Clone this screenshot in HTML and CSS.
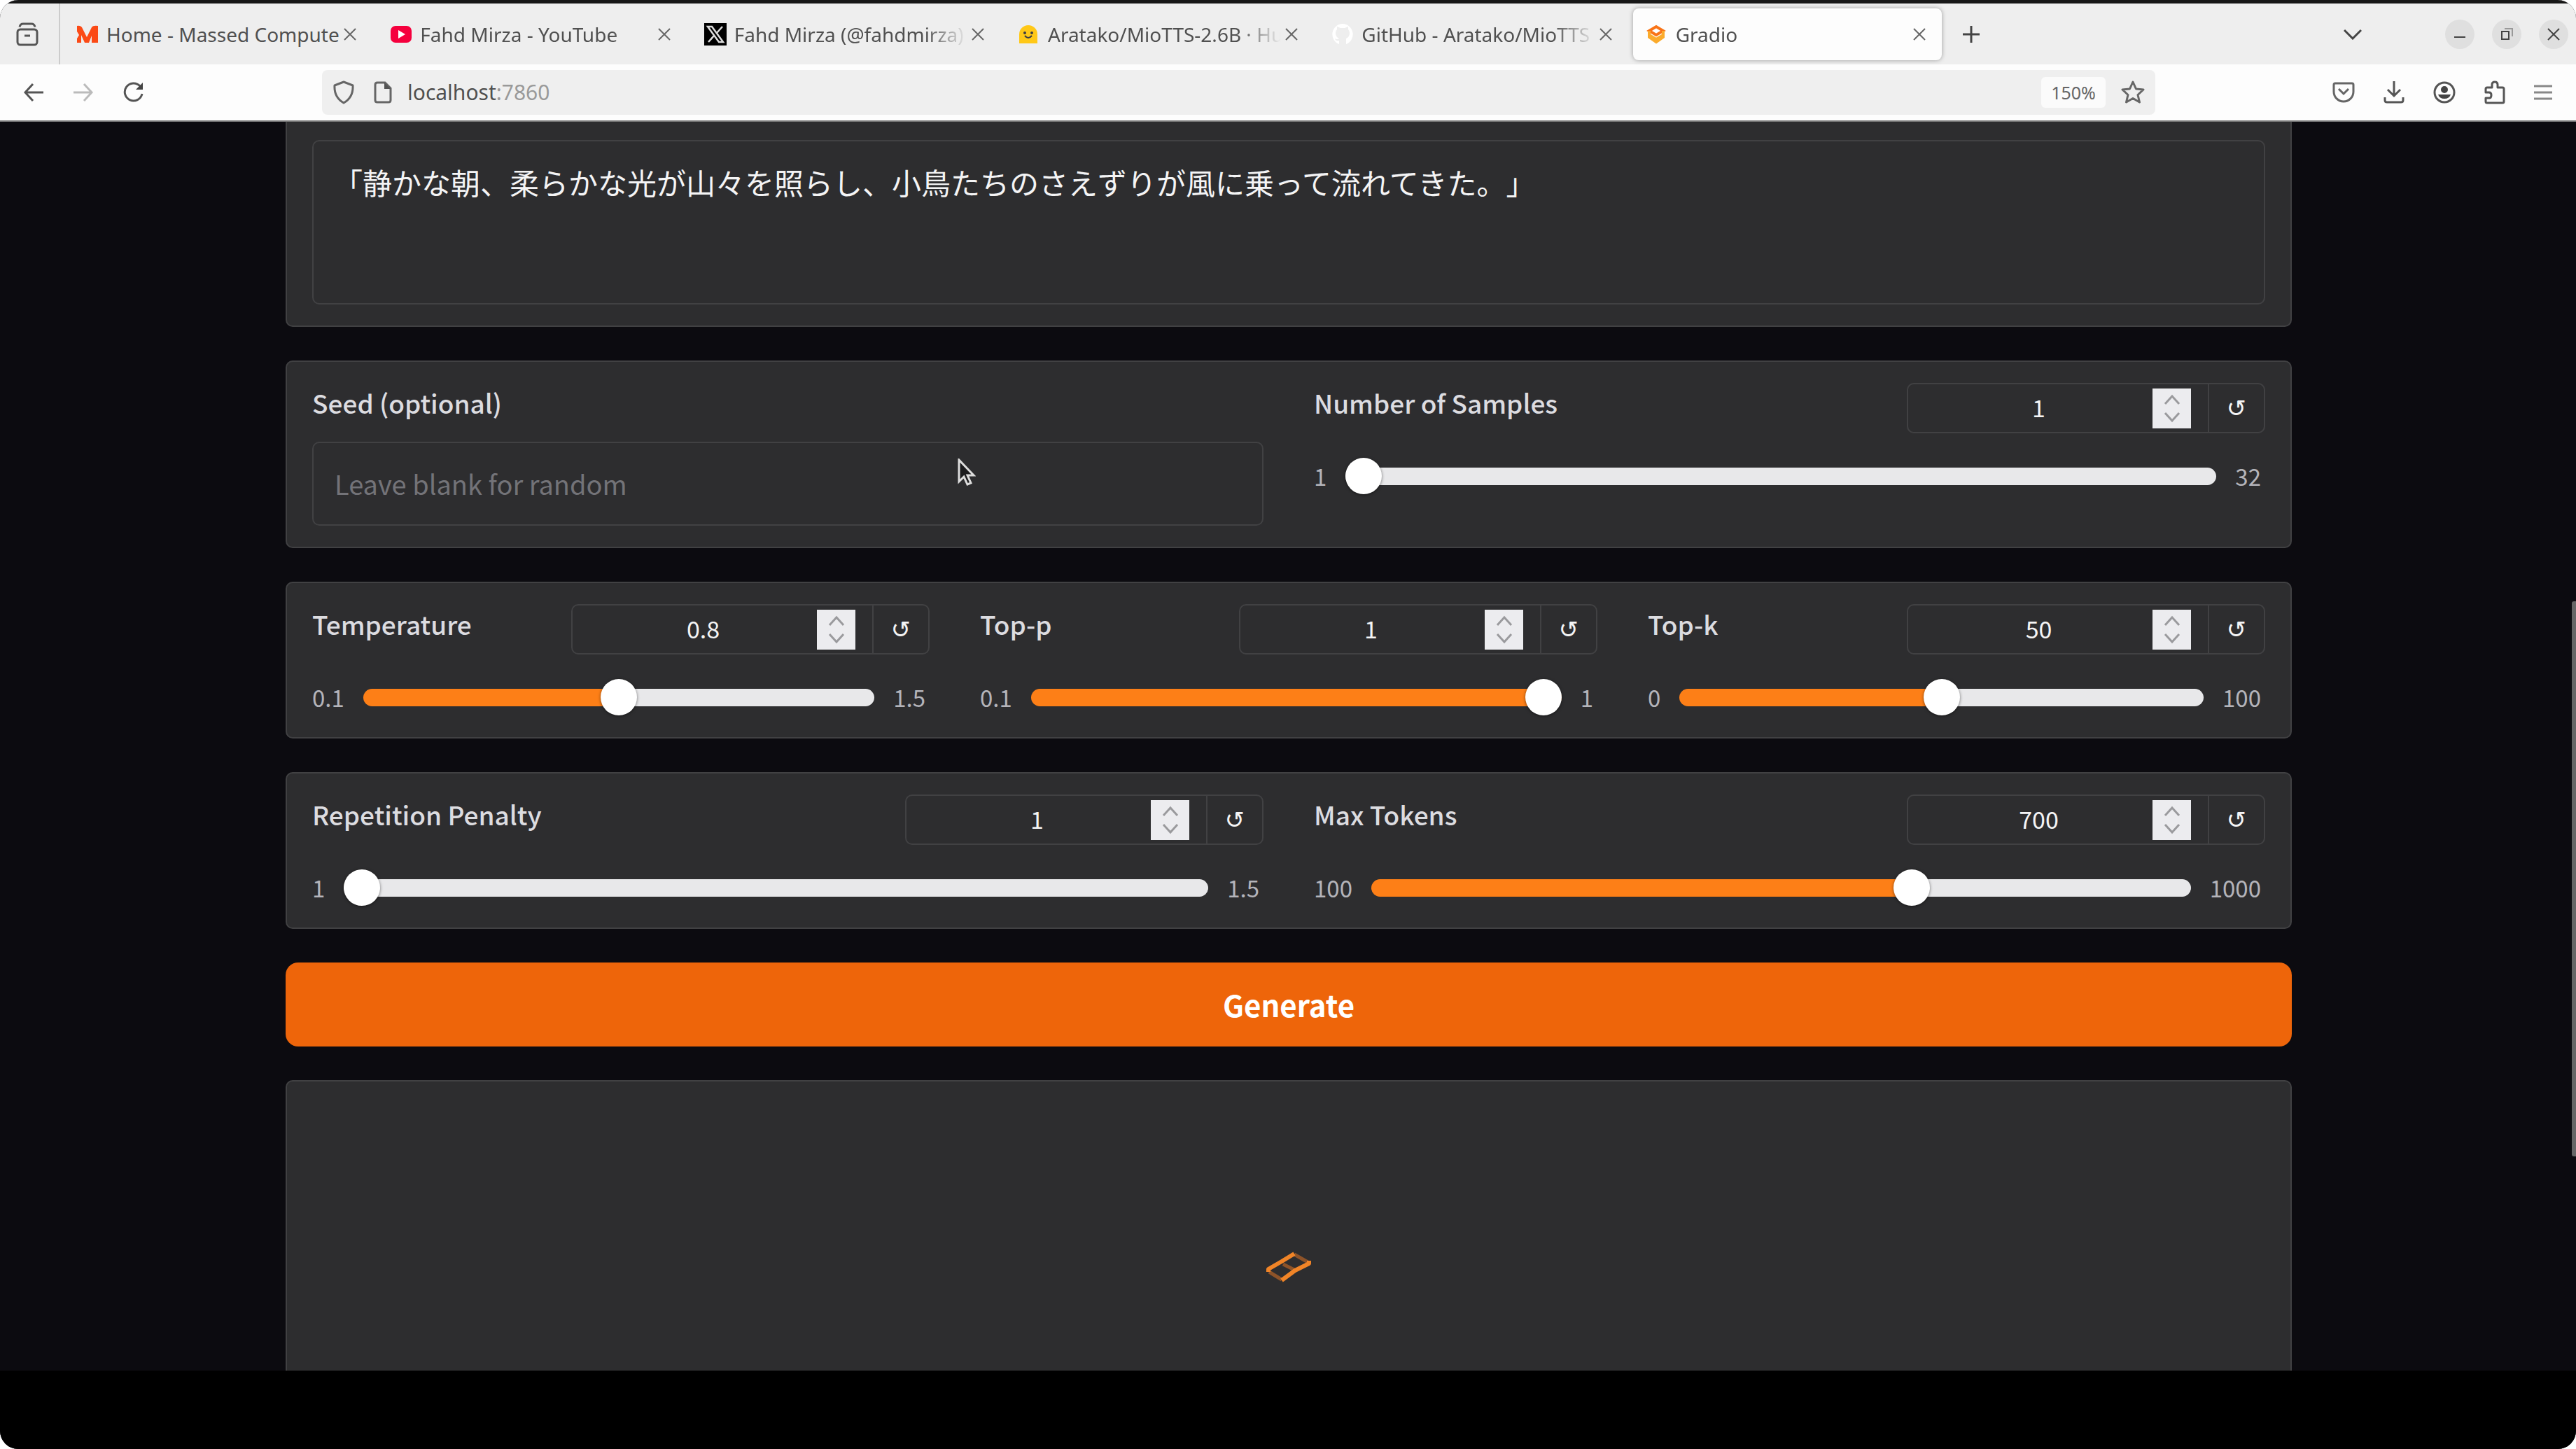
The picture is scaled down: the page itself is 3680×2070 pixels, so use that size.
FILE: index.html
```html
<!DOCTYPE html>
<html lang="en">
  <head>
    <meta charset="UTF-8" />
    <meta name="viewport" content="width=device-width, initial-scale=1.0" />
    <title>Gradio</title>
    <link rel="stylesheet" href="styles.css">
  </head>
  <body>
    <div class="window">
      <header class="browser">
        <div class="tabbar">
          <button class="icon-btn history" aria-label="Recent browsing">
            <svg width="32" height="34" viewBox="0 0 32 34" fill="none" stroke="#555" stroke-width="3">
              <rect x="2" y="10" width="28" height="22" rx="4" />
              <path d="M5 6.500 Q6 2 10 2 H22 Q26 2 27 6.500 M12 19 H20" />
            </svg>
          </button>
          <nav class="tabs">
            <div class="tab">
              <svg class="favicon" viewBox="0 0 32 32">
                <path fill="#fb4a16" d="M1 4 Q7 3 9 8 L15 20 L22 6 Q24 3 31 4 V28 H22 V18 L18 28 H12 L7 17 V28 H1 V22 L4 17 L1 12 Z" />
              </svg>
              <a href="#" class="tab-title">Home - Massed Compute</a>
              <button class="close" aria-label="Close tab"><svg width="18" height="18" viewBox="0 0 18 18"><path d="M1 1 L17 17 M17 1 L1 17" /></svg></button>
            </div>
            <div class="tab">
              <svg class="favicon" viewBox="0 0 32 32">
                <rect x="1" y="4" width="30" height="24" rx="7" fill="#f5003d" />
                <path d="M12 10 L22 16 L12 22 Z" fill="#fff" />
              </svg>
              <a href="#" class="tab-title">Fahd Mirza - YouTube</a>
              <button class="close" aria-label="Close tab"><svg width="18" height="18" viewBox="0 0 18 18"><path d="M1 1 L17 17 M17 1 L1 17" /></svg></button>
            </div>
            <div class="tab">
              <svg class="favicon" viewBox="0 0 32 32">
                <rect width="32" height="32" fill="#000" />
                <path d="M5 5 H11 L27 27 H21 Z M26 5 L18 14 M14 18 L6 27" fill="none" stroke="#ddd" stroke-width="2.500" />
              </svg>
              <a href="#" class="tab-title">Fahd Mirza (@fahdmirza)</a>
              <button class="close" aria-label="Close tab"><svg width="18" height="18" viewBox="0 0 18 18"><path d="M1 1 L17 17 M17 1 L1 17" /></svg></button>
            </div>
            <div class="tab">
              <svg class="favicon" viewBox="0 0 32 32">
                <path d="M2 29 V16 A13 13 0 0 1 28 16 V29 Z" fill="#ffc817" />
                <circle cx="10" cy="14" r="2" fill="#3a3b45" />
                <circle cx="20" cy="14" r="2" fill="#3a3b45" />
                <path d="M10 18 Q15 24 20 18" fill="none" stroke="#3a3b45" stroke-width="2" />
              </svg>
              <a href="#" class="tab-title">Aratako/MioTTS-2.6B · Hu</a>
              <button class="close" aria-label="Close tab"><svg width="18" height="18" viewBox="0 0 18 18"><path d="M1 1 L17 17 M17 1 L1 17" /></svg></button>
            </div>
            <div class="tab">
              <svg class="favicon" viewBox="0 0 32 32">
                <path fill="#fff" d="M16 1 A15 15 0 0 0 11 30 V25 Q6 26 5 22 Q8 24 11 22 Q6 20 6 14 Q6 11 8 9 V5 L13 7 H19 L24 5 V9 Q26 11 26 14 Q26 20 21 22 V30 A15 15 0 0 0 16 1 Z" />
              </svg>
              <a href="#" class="tab-title">GitHub - Aratako/MioTTS</a>
              <button class="close" aria-label="Close tab"><svg width="18" height="18" viewBox="0 0 18 18"><path d="M1 1 L17 17 M17 1 L1 17" /></svg></button>
            </div>
            <div class="tab active">
              <svg class="favicon" viewBox="0 0 32 32" fill="none" stroke-width="4">
                <path d="M5 11 L15 5 L25 11 L15 17 Z" stroke="#f97316" />
                <path d="M5 11 V20 L15 27 L25 20 V11 M5 17 L15 23 L25 17" stroke="#fbab2c" />
              </svg>
              <a href="#" class="tab-title">Gradio</a>
              <button class="close" aria-label="Close tab"><svg width="18" height="18" viewBox="0 0 18 18"><path d="M1 1 L17 17 M17 1 L1 17" /></svg></button>
            </div>
          </nav>
          <button class="icon-btn new-tab" aria-label="New tab">
            <svg width="26" height="26" viewBox="0 0 26 26" stroke="#444" stroke-width="3"><path d="M13 1 V25 M1 13 H25" /></svg>
          </button>
          <button class="icon-btn tab-list" aria-label="List all tabs">
            <svg width="26" height="16" viewBox="0 0 26 16" fill="none" stroke="#444" stroke-width="3"><path d="M1 2 L13 14 L25 2" /></svg>
          </button>
          <div class="window-buttons">
            <button aria-label="Minimize"><svg width="20" height="20" viewBox="0 0 20 20"><path d="M2 14 H18" /></svg></button>
            <button aria-label="Restore"><svg width="20" height="20" viewBox="0 0 20 20"><path d="M3 6 H13 V17 H3 Z" /><path d="M7 2 H18 V13" stroke="#999" /></svg></button>
            <button aria-label="Close"><svg width="20" height="20" viewBox="0 0 20 20"><path d="M2 2 L18 18 M18 2 L2 18" /></svg></button>
          </div>
        </div>

        <div class="toolbar">
          <div class="nav-buttons">
            <button class="icon-btn" aria-label="Back">
              <svg width="28" height="28" viewBox="0 0 28 28" fill="none" stroke="#555" stroke-width="3"><path d="M13 2 L2 14 L13 26 M2 14 H28" /></svg>
            </button>
            <button class="icon-btn" aria-label="Forward" disabled>
              <svg width="28" height="28" viewBox="0 0 28 28" fill="none" stroke="#bbb" stroke-width="3"><path d="M15 2 L26 14 L15 26 M26 14 H0" /></svg>
            </button>
            <button class="icon-btn" aria-label="Reload">
              <svg width="30" height="30" viewBox="0 0 30 30" fill="none" stroke="#555" stroke-width="3"><path d="M24 6 A12.500 12.500 0 1 0 27 17" /><path d="M28 1 V11 H18 Z" fill="#444" stroke="none" /></svg>
            </button>
          </div>
          <div class="urlbar">
            <svg width="30" height="34" viewBox="0 0 30 34" fill="none" stroke="#666" stroke-width="3"><path d="M15 2 L28 7 Q29 24 15 32 Q1 24 2 7 Z" stroke-linejoin="round" /></svg>
            <svg width="26" height="32" viewBox="0 0 26 32" fill="none" stroke="#666" stroke-width="3"><path d="M5 2 H16 L24 10 V27 Q24 30 21 30 H5 Q2 30 2 27 V5 Q2 2 5 2 Z" /><path d="M15 2 V11 H24 Z" fill="#555" stroke="none" /></svg>
            <a href="#" class="url">localhost<span>:7860</span></a>
            <button class="zoom-level">150%</button>
            <button class="icon-btn" aria-label="Bookmark this page">
              <svg width="34" height="34" viewBox="0 0 34 34" fill="none" stroke="#666" stroke-width="3" stroke-linejoin="round"><path d="M17 2 L21.500 12 L32 13 L24 20.500 L26.500 31 L17 25.500 L7.500 31 L10 20.500 L2 13 L12.500 12 Z" /></svg>
            </button>
          </div>
          <div class="tools">
            <button class="icon-btn" aria-label="Save to Pocket">
              <svg width="32" height="32" viewBox="0 0 32 32" fill="none" stroke="#666" stroke-width="3"><path d="M4 3 H28 Q30 3 30 5 V15 A14 14 0 0 1 2 15 V5 Q2 3 4 3 Z M9 11 L16 18 L23 11" /></svg>
            </button>
            <button class="icon-btn" aria-label="Downloads">
              <svg width="32" height="32" viewBox="0 0 32 32" fill="none" stroke="#555" stroke-width="3"><path d="M16 0 V20 M7 12 L16 21 L25 12 M3 23 V27 Q3 30 6 30 H26 Q29 30 29 27 V23" /></svg>
            </button>
            <button class="icon-btn" aria-label="Account">
              <svg width="32" height="32" viewBox="0 0 32 32"><circle cx="16" cy="16" r="14" fill="none" stroke="#555" stroke-width="3" /><circle cx="16" cy="12" r="5" fill="#444" /><path d="M7 19 H25 Q23 25 16 25 Q9 25 7 19 Z" fill="#444" /></svg>
            </button>
            <button class="icon-btn" aria-label="Extensions">
              <svg width="32" height="34" viewBox="0 0 32 34" fill="none" stroke="#555" stroke-width="3" stroke-linejoin="round"><path d="M3 12 Q3 10 5 10 H12 V6 Q12 2 16 2 Q20 2 20 6 V10 H27 Q29 10 29 12 V30 Q29 32 27 32 H5 Q3 32 3 30 V25 H8 Q11 25 11 21 Q11 17 8 17 H3 Z" /></svg>
            </button>
            <button class="icon-btn" aria-label="Open menu">
              <svg width="26" height="24" viewBox="0 0 26 24" stroke="#888" stroke-width="3"><path d="M0 3 H26 M0 12 H26 M0 21 H26" /></svg>
            </button>
          </div>
        </div>
      </header>

      <main class="page">
        <form class="container">
          <section class="panel panel-text">
            <textarea class="textbox prompt" aria-label="Text" lang="ja" spellcheck="false">「静かな朝、柔らかな光が山々を照らし、小鳥たちのさえずりが風に乗って流れてきた。」</textarea>
          </section>

          <section class="panel cols-2">
            <div class="block">
              <label class="label" for="seed">Seed (optional)</label>
              <input class="textbox seed" type="text" id="seed" placeholder="Leave blank for random" />
            </div>
            <div class="block">
              <div class="head">
                <label class="label" for="samples">Number of Samples</label>
                <div class="number">
                  <input type="number" id="samples" value="1" />
                  <span class="stepper">
                    <button type="button" aria-label="Increase"><svg width="24" height="16" viewBox="0 0 24 16"><path d="M2 14 L12 3 L22 14" /></svg></button>
                    <button type="button" aria-label="Decrease"><svg width="24" height="16" viewBox="0 0 24 16"><path d="M2 2 L12 13 L22 2" /></svg></button>
                  </span>
                  <button type="button" class="reset" aria-label="Reset">↺</button>
                </div>
              </div>
              <div class="slider">
                <span>1</span>
                <input type="range" min="1" max="32" value="1" aria-label="Number of Samples" style="--fill: 0%" />
                <span>32</span>
              </div>
            </div>
          </section>

          <section class="panel cols-3">
            <div class="block">
              <div class="head">
                <label class="label" for="temperature">Temperature</label>
                <div class="number">
                  <input type="number" id="temperature" value="0.8" step="0.1" />
                  <span class="stepper">
                    <button type="button" aria-label="Increase"><svg width="24" height="16" viewBox="0 0 24 16"><path d="M2 14 L12 3 L22 14" /></svg></button>
                    <button type="button" aria-label="Decrease"><svg width="24" height="16" viewBox="0 0 24 16"><path d="M2 2 L12 13 L22 2" /></svg></button>
                  </span>
                  <button type="button" class="reset" aria-label="Reset">↺</button>
                </div>
              </div>
              <div class="slider">
                <span>0.1</span>
                <input type="range" min="0.1" max="1.5" step="0.1" value="0.8" aria-label="Temperature" style="--fill: 50%" />
                <span>1.5</span>
              </div>
            </div>
            <div class="block">
              <div class="head">
                <label class="label" for="top-p">Top-p</label>
                <div class="number">
                  <input type="number" id="top-p" value="1" step="0.05" />
                  <span class="stepper">
                    <button type="button" aria-label="Increase"><svg width="24" height="16" viewBox="0 0 24 16"><path d="M2 14 L12 3 L22 14" /></svg></button>
                    <button type="button" aria-label="Decrease"><svg width="24" height="16" viewBox="0 0 24 16"><path d="M2 2 L12 13 L22 2" /></svg></button>
                  </span>
                  <button type="button" class="reset" aria-label="Reset">↺</button>
                </div>
              </div>
              <div class="slider">
                <span>0.1</span>
                <input type="range" min="0.1" max="1" step="0.05" value="1" aria-label="Top-p" style="--fill: 100%" />
                <span>1</span>
              </div>
            </div>
            <div class="block">
              <div class="head">
                <label class="label" for="top-k">Top-k</label>
                <div class="number">
                  <input type="number" id="top-k" value="50" />
                  <span class="stepper">
                    <button type="button" aria-label="Increase"><svg width="24" height="16" viewBox="0 0 24 16"><path d="M2 14 L12 3 L22 14" /></svg></button>
                    <button type="button" aria-label="Decrease"><svg width="24" height="16" viewBox="0 0 24 16"><path d="M2 2 L12 13 L22 2" /></svg></button>
                  </span>
                  <button type="button" class="reset" aria-label="Reset">↺</button>
                </div>
              </div>
              <div class="slider">
                <span>0</span>
                <input type="range" min="0" max="100" value="50" aria-label="Top-k" style="--fill: 50%" />
                <span>100</span>
              </div>
            </div>
          </section>

          <section class="panel cols-2">
            <div class="block">
              <div class="head">
                <label class="label" for="penalty">Repetition Penalty</label>
                <div class="number">
                  <input type="number" id="penalty" value="1" step="0.05" />
                  <span class="stepper">
                    <button type="button" aria-label="Increase"><svg width="24" height="16" viewBox="0 0 24 16"><path d="M2 14 L12 3 L22 14" /></svg></button>
                    <button type="button" aria-label="Decrease"><svg width="24" height="16" viewBox="0 0 24 16"><path d="M2 2 L12 13 L22 2" /></svg></button>
                  </span>
                  <button type="button" class="reset" aria-label="Reset">↺</button>
                </div>
              </div>
              <div class="slider">
                <span>1</span>
                <input type="range" min="1" max="1.5" step="0.05" value="1" aria-label="Repetition Penalty" style="--fill: 0%" />
                <span>1.5</span>
              </div>
            </div>
            <div class="block">
              <div class="head">
                <label class="label" for="max-tokens">Max Tokens</label>
                <div class="number">
                  <input type="number" id="max-tokens" value="700" />
                  <span class="stepper">
                    <button type="button" aria-label="Increase"><svg width="24" height="16" viewBox="0 0 24 16"><path d="M2 14 L12 3 L22 14" /></svg></button>
                    <button type="button" aria-label="Decrease"><svg width="24" height="16" viewBox="0 0 24 16"><path d="M2 2 L12 13 L22 2" /></svg></button>
                  </span>
                  <button type="button" class="reset" aria-label="Reset">↺</button>
                </div>
              </div>
              <div class="slider">
                <span>100</span>
                <input type="range" min="100" max="1000" value="700" aria-label="Max Tokens" style="--fill: 66%" />
                <span>1000</span>
              </div>
            </div>
          </section>

          <button type="button" class="generate">Generate</button>

          <section class="panel output">
            <svg width="64" height="44" viewBox="0 0 64 44" fill="none" stroke-linejoin="round">
              <path d="M40 4 L61 16 M24 18 L40 26 M4 29 L22 40" stroke="#8d5329" stroke-width="5" />
              <path d="M3 29 V25 L22 14 L40 3 M22 41 L41 27 L61 17 V13" stroke="#f08427" stroke-width="6" />
            </svg>
          </section>
        </form>
        <div class="scrollbar"></div>
        <svg class="cursor" width="26" height="40" viewBox="0 0 26 40">
          <path d="M2 2 V33 L9 26 L14 37 L19 35 L14 24 H23 Z" fill="#1c1c1e" stroke="#ddd" stroke-width="3" />
        </svg>
      </main>
      <footer class="letterbox"></footer>
    </div>
  </body>
</html>
```

FILE: styles.css
```css
* {
  box-sizing: border-box;
}
html {
  background: #fff;
}
body {
  margin: 0;
  font-family: "Noto Sans CJK JP", "Noto Sans", sans-serif;
}
button,
input,
textarea {
  font-family: inherit;
}
button {
  padding: 0;
  border: none;
  background: none;
  cursor: pointer;
}
a {
  color: inherit;
  text-decoration: none;
}
.window {
  display: flex;
  flex-direction: column;
  height: 100vh;
  border-radius: 26px;
  overflow: hidden;
  background: #0c0b10;
}

/* browser chrome */
.browser {
  font-family: "Noto Sans", sans-serif;
  color: #505050;
  border-bottom: 2px solid #777;
}
.tabbar {
  display: flex;
  align-items: center;
  height: 92px;
  padding-right: 11px;
  border-top: 5px solid #171717;
  background: #eee;
}
.icon-btn {
  display: flex;
  align-items: center;
  justify-content: center;
}
.history {
  width: 86px;
  height: 100%;
  padding-right: 7px;
  border-right: 2px solid #ccc;
}
.tabs {
  display: flex;
  flex: 0 1 2688px;
  gap: 7px;
  min-width: 0;
  padding-left: 5px;
}
.tab {
  display: flex;
  flex: 1 1 0;
  min-width: 0;
  align-items: center;
  height: 74px;
  padding: 0 23px 0 18px;
  border-radius: 8px;
}
.tab.active {
  background: #fdfdfd;
  box-shadow: 0 0 6px rgba(0, 0, 0, 0.35);
}
.favicon {
  flex: none;
  width: 32px;
  height: 32px;
  margin-right: 11px;
}
.tab-title {
  flex: 1;
  overflow: hidden;
  white-space: nowrap;
  font-size: 28px;
  line-height: 40px;
  -webkit-mask-image: linear-gradient(to left, transparent, #000 60px);
  mask-image: linear-gradient(to left, transparent, #000 60px);
}
.tab:first-child .tab-title {
  -webkit-mask-image: none;
  mask-image: none;
}
.close {
  flex: none;
  display: flex;
  margin-left: 6px;
}
.close svg {
  stroke: #666;
  stroke-width: 2;
}
.new-tab {
  width: 84px;
}
.tab-list {
  width: 60px;
  margin-left: auto;
}
.window-buttons {
  display: flex;
  gap: 25px;
  margin-left: 102px;
}
.window-buttons button {
  display: flex;
  align-items: center;
  justify-content: center;
  width: 42px;
  height: 42px;
  border-radius: 50%;
  background: #dfdfdf;
}
.window-buttons svg {
  fill: none;
  stroke: #444;
  stroke-width: 2;
}
.toolbar {
  display: flex;
  align-items: center;
  height: 80px;
  padding: 0 34px;
  background: #fdfdfd;
}
.nav-buttons {
  display: flex;
  gap: 43px;
  width: 426px;
}
.urlbar {
  display: flex;
  flex: 1;
  align-items: center;
  height: 64px;
  padding: 0 15px 0 16px;
  border-radius: 8px;
  background: #efefef;
}
.urlbar > svg + svg {
  margin-left: 28px;
}
.url {
  flex: 1;
  margin-left: 22px;
  font-size: 30px;
  line-height: 40px;
}
.url span {
  color: #999;
}
.zoom-level {
  width: 92px;
  height: 44px;
  margin-right: 22px;
  border-radius: 6px;
  background: #fbfbfb;
  color: #666;
  font-size: 25px;
}
.tools {
  display: flex;
  justify-content: flex-end;
  align-items: center;
  gap: 40px;
  width: 567px;
}

/* page */
.page {
  position: relative;
  flex: 1;
  min-height: 0;
  padding-left: 2px;
  overflow: hidden;
  color: #f4f4f5;
}
.container {
  display: flex;
  flex-direction: column;
  gap: 48px;
  max-width: 2866px;
  margin: 0 auto;
}
.panel {
  display: grid;
  border: 2px solid #414143;
  border-radius: 10px;
  background: #2d2d2f;
}
.panel-text {
  padding: 26px 36px 30px;
  border-top: none;
  border-radius: 0 0 10px 10px;
}
.cols-2 {
  grid-template-columns: repeat(2, 1fr);
}
.cols-3 {
  grid-template-columns: repeat(3, 1fr);
}
.block {
  min-width: 0;
  padding: 30px 36px;
}
.label {
  display: block;
  color: #dcdce0;
  font-size: 37px;
  font-weight: 500;
  line-height: 56px;
}
.textbox {
  display: block;
  width: 100%;
  border: 2px solid #414143;
  border-radius: 10px;
  background: #2d2d2f;
  color: #f4f4f5;
}
.prompt {
  height: 235px;
  padding: 28px;
  font-size: 42px;
  line-height: 60px;
  resize: none;
  text-spacing-trim: space-all;
}
.seed {
  height: 120px;
  margin-top: 28px;
  padding: 0 30px 2px;
  font-size: 38px;
}
.seed::placeholder {
  color: #737378;
}
.head {
  display: flex;
  justify-content: space-between;
  height: 72px;
}
.number {
  display: flex;
  align-items: center;
  width: 512px;
  height: 72px;
  border: 2px solid #414143;
  border-radius: 10px;
}
.number input {
  flex: 1;
  min-width: 0;
  height: 100%;
  padding: 0 0 3px 24px;
  border: none;
  background: none;
  color: #f4f4f5;
  font-size: 34px;
  text-align: center;
  appearance: textfield;
}
.number input::-webkit-inner-spin-button {
  display: none;
}
.stepper {
  display: flex;
  flex-direction: column;
  align-items: center;
  justify-content: center;
  gap: 9px;
  width: 55px;
  height: 57px;
  margin-right: 24px;
  background: #ececef;
}
.stepper button {
  display: flex;
}
.stepper svg {
  fill: none;
  stroke: #9a9a9d;
  stroke-width: 3;
}
.reset {
  width: 80px;
  height: 100%;
  border-left: 2px solid #414143;
  color: #f4f4f5;
  font-family: "DejaVu Sans", sans-serif;
  font-size: 34px;
}
.slider {
  display: flex;
  align-items: center;
  gap: 27px;
  height: 54px;
  margin-top: 34px;
  padding-right: 6px;
  color: #b4b4ba;
  font-size: 33px;
  line-height: 54px;
}
.slider input {
  flex: 1;
  min-width: 0;
  height: 25px;
  margin: 0;
  border-radius: 13px;
  background: linear-gradient(to right, #fd7f17 var(--fill), #e8e8ea var(--fill));
  appearance: none;
}
.slider input::-webkit-slider-thumb {
  width: 52px;
  height: 52px;
  border-radius: 50%;
  background: #fff;
  box-shadow: 0 1px 4px rgba(0, 0, 0, 0.5);
  appearance: none;
}
.generate {
  height: 120px;
  padding-bottom: 2px;
  border-radius: 18px;
  background: #ee650a;
  color: #fff;
  font-size: 42px;
  font-weight: bold;
}
.output {
  height: 534px;
  place-items: center;
}
.scrollbar {
  position: absolute;
  top: 685px;
  right: 0;
  width: 6px;
  height: 793px;
  border-radius: 3px 0 0 3px;
  background: #666;
}
.cursor {
  position: absolute;
  top: 481px;
  left: 1368px;
}
.letterbox {
  height: 112px;
  background: #000;
}
```
